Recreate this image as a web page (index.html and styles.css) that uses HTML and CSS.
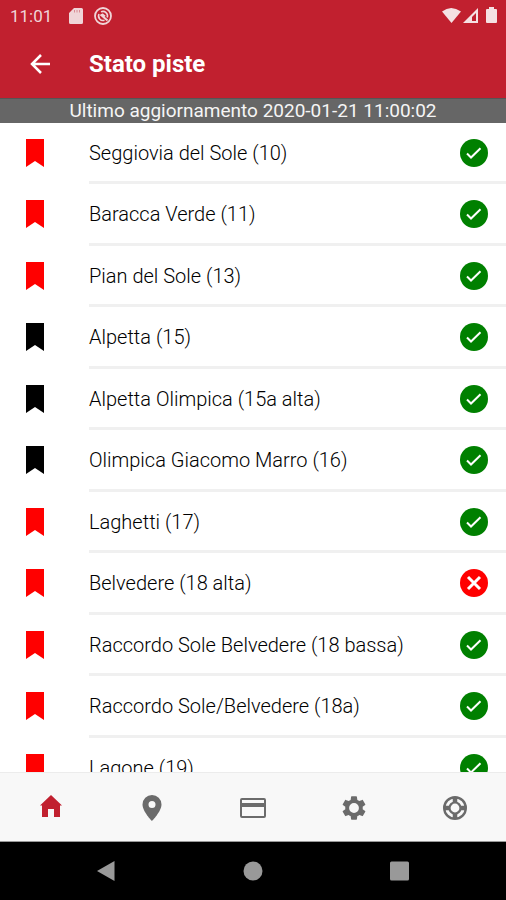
FILE: index.html
```html
<!DOCTYPE html>
<html lang="it">
<head>
  <meta charset="UTF-8">
  <meta name="viewport" content="width=device-width, initial-scale=1.0">
  <title>Stato piste</title>
  <link rel="stylesheet" href="styles.css">
</head>
<body>
  <svg class="sprite" aria-hidden="true">
    <symbol id="flag" viewBox="0 0 18 28">
      <path d="M0 0h18v28l-9-6-9 6z" />
    </symbol>
    <symbol id="open" viewBox="0 0 28 28">
      <circle cx="14" cy="14" r="14" />
      <path d="M7 14.500l4 4L20.500 9.200" fill="none" stroke="#fff" stroke-width="2" />
    </symbol>
    <symbol id="closed" viewBox="0 0 28 28">
      <circle cx="14" cy="14" r="14" />
      <path d="M8 8l12 12M20 8L8 20" fill="none" stroke="#fff" stroke-width="3" />
    </symbol>
  </svg>

  <header class="header">
    <div class="status-bar">
      <span class="clock">11:01</span>
      <svg class="sd-card" viewBox="0 0 14 16">
        <path d="M5 0h7.500a1.500 1.500 0 0 1 1.500 1.500v13a1.500 1.500 0 0 1-1.500 1.500h-11A1.500 1.500 0 0 1 0 14.500V5z" fill="#f0d5d8" />
        <path d="M5.500 2v2.500M8 2v2.500M10.500 2v2.500" stroke="#d88c94" stroke-width="1" />
      </svg>
      <svg class="sync" viewBox="0 0 18 18" fill="none" stroke="#f0d5d8">
        <circle cx="9" cy="9" r="8" stroke-width="1.800" />
        <path d="M10.500 13.200A4.500 4.500 0 0 1 5 7M7 4.900A4.500 4.500 0 0 1 13.200 10.500" stroke-width="1.600" />
        <path d="M6.500 7.500l7 6M8 7l3 2.500" stroke-width="2" />
      </svg>
      <svg class="signals" viewBox="0 0 56 18" fill="#f5e1e3">
        <path d="M0 4.500Q9-2.500 19 4.500L9.500 16z" />
        <path d="M21 16L36 1v15z" />
        <path d="M30 10l4-4v8h-4z" fill="#c1202f" />
        <path d="M47 0h5v2h2a1 1 0 0 1 1 1v12a1 1 0 0 1-1 1h-9a1 1 0 0 1-1-1V3a1 1 0 0 1 1-1h2z" />
      </svg>
    </div>
    <div class="toolbar">
      <button class="back" type="button" aria-label="Indietro">
        <svg viewBox="0 0 20 20" fill="none" stroke="#fff" stroke-width="2.500">
          <path d="M20 10H2M11 1l-9 9 9 9" />
        </svg>
      </button>
      <h1 class="title">Stato piste</h1>
    </div>
  </header>

  <p class="updated">Ultimo aggiornamento 2020-01-21 11:00:02</p>

  <main class="content">
    <ul class="slopes">
      <li class="slope">
        <svg class="flag red"><use href="#flag" /></svg>
        <div class="info"><span>Seggiovia del Sole (10)</span><svg class="state green"><use href="#open" /></svg></div>
      </li>
      <li class="slope">
        <svg class="flag red"><use href="#flag" /></svg>
        <div class="info"><span>Baracca Verde (11)</span><svg class="state green"><use href="#open" /></svg></div>
      </li>
      <li class="slope">
        <svg class="flag red"><use href="#flag" /></svg>
        <div class="info"><span>Pian del Sole (13)</span><svg class="state green"><use href="#open" /></svg></div>
      </li>
      <li class="slope">
        <svg class="flag black"><use href="#flag" /></svg>
        <div class="info"><span>Alpetta (15)</span><svg class="state green"><use href="#open" /></svg></div>
      </li>
      <li class="slope">
        <svg class="flag black"><use href="#flag" /></svg>
        <div class="info"><span>Alpetta Olimpica (15a alta)</span><svg class="state green"><use href="#open" /></svg></div>
      </li>
      <li class="slope">
        <svg class="flag black"><use href="#flag" /></svg>
        <div class="info"><span>Olimpica Giacomo Marro (16)</span><svg class="state green"><use href="#open" /></svg></div>
      </li>
      <li class="slope">
        <svg class="flag red"><use href="#flag" /></svg>
        <div class="info"><span>Laghetti (17)</span><svg class="state green"><use href="#open" /></svg></div>
      </li>
      <li class="slope">
        <svg class="flag red"><use href="#flag" /></svg>
        <div class="info"><span>Belvedere (18 alta)</span><svg class="state red"><use href="#closed" /></svg></div>
      </li>
      <li class="slope">
        <svg class="flag red"><use href="#flag" /></svg>
        <div class="info"><span>Raccordo Sole Belvedere (18 bassa)</span><svg class="state green"><use href="#open" /></svg></div>
      </li>
      <li class="slope">
        <svg class="flag red"><use href="#flag" /></svg>
        <div class="info"><span>Raccordo Sole/Belvedere (18a)</span><svg class="state green"><use href="#open" /></svg></div>
      </li>
      <li class="slope">
        <svg class="flag red"><use href="#flag" /></svg>
        <div class="info"><span>Lagone (19)</span><svg class="state green"><use href="#open" /></svg></div>
      </li>
    </ul>
  </main>

  <nav class="tabs">
    <a class="tab active" href="#home" aria-label="Home">
      <svg viewBox="0 0 28 28"><path d="M14 1L25 11.500h-2V23h-6v-8h-6v8H5V11.500H3z" /></svg>
    </a>
    <a class="tab" href="#mappa" aria-label="Mappa">
      <svg viewBox="0 0 28 28"><path fill-rule="evenodd" d="M14 1a9.500 9.500 0 0 0-9.500 9.500C4.500 17.500 14 27 14 27s9.500-9.500 9.500-16.500A9.500 9.500 0 0 0 14 1zm0 6a3.500 3.500 0 1 1 0 7 3.500 3.500 0 0 1 0-7z" /></svg>
    </a>
    <a class="tab" href="#skipass" aria-label="Skipass">
      <svg viewBox="0 0 28 28"><path fill-rule="evenodd" d="M3 4h22a2 2 0 0 1 2 2v16a2 2 0 0 1-2 2H3a2 2 0 0 1-2-2V6a2 2 0 0 1 2-2zm0 2v3h22V6zm0 7v9h22v-9z" /></svg>
    </a>
    <a class="tab" href="#impostazioni" aria-label="Impostazioni">
      <svg viewBox="0 0 24 24"><path d="M19.430 12.980c.04-.32.07-.64.07-.98s-.03-.66-.07-.98l2.110-1.650c.19-.15.24-.42.12-.64l-2-3.460c-.12-.22-.39-.3-.61-.22l-2.490 1c-.52-.4-1.080-.73-1.690-.98l-.38-2.650A.49.49 0 0 0 14 2h-4c-.25 0-.46.180-.49.420l-.38 2.650c-.61.250-1.170.590-1.690.980l-2.490-1c-.23-.09-.49 0-.61.220l-2 3.460c-.13.220-.07.490.12.640l2.110 1.650c-.04.320-.07.650-.07.980s.03.660.07.980l-2.110 1.650c-.19.150-.24.420-.12.640l2 3.460c.12.220.39.300.61.220l2.490-1c.52.400 1.080.730 1.690.980l.38 2.650c.03.240.24.420.49.420h4c.25 0 .46-.18.49-.42l.38-2.650c.61-.25 1.170-.59 1.690-.98l2.490 1c.23.090.49 0 .61-.22l2-3.460c.12-.22.07-.49-.12-.64zM12 16.200a4.200 4.200 0 1 1 0-8.400 4.200 4.200 0 0 1 0 8.400z" /></svg>
    </a>
    <a class="tab" href="#aiuto" aria-label="Aiuto">
      <svg viewBox="0 0 28 28">
        <g fill="none" stroke="currentColor">
          <circle cx="14" cy="14" r="10.800" stroke-width="2.400" />
          <circle cx="14" cy="14" r="5.500" stroke-width="2.200" />
          <path d="M14 3.500V9M14 19v5.500M3.500 14H9M19 14h5.500" stroke-width="4.500" />
        </g>
      </svg>
    </a>
  </nav>

  <div class="system-nav">
    <button type="button" aria-label="Indietro"><svg viewBox="0 0 20 22"><path d="M18.500 1v20L1 11z" /></svg></button>
    <button type="button" aria-label="Schermata iniziale"><svg viewBox="0 0 20 22"><circle cx="10" cy="11" r="9.500" /></svg></button>
    <button type="button" aria-label="App recenti"><svg viewBox="0 0 20 22"><rect y="1.500" width="19" height="19" rx="1.500" /></svg></button>
  </div>
</body>
</html>
```

FILE: styles.css
```css
:root {
  --brand: #c1202f;
  --open: #008000;
  --closed: #ff0000;
  --icon: #6b6b6b;
}

* {
  box-sizing: border-box;
}

body {
  margin: 0;
  height: 100vh;
  display: flex;
  flex-direction: column;
  background: #fff;
  color: #000;
  font-family: Roboto, "Liberation Sans", sans-serif;
  font-size: 20px;
}

svg {
  display: block;
}

button {
  padding: 0;
  border: 0;
  background: none;
}

.sprite {
  display: none;
}

/* Header */
.header {
  background: var(--brand);
  color: #fff;
}

.status-bar {
  display: flex;
  align-items: center;
  height: 32px;
  padding: 0 8px 0 10px;
}

.clock {
  color: #f0d5d8;
  font-size: 17px;
}

.sd-card {
  width: 14px;
  height: 16px;
  margin-left: 17px;
}

.sync {
  width: 18px;
  height: 18px;
  margin-left: 11px;
}

.signals {
  width: 56px;
  height: 18px;
  margin-left: auto;
}

.toolbar {
  display: flex;
  align-items: center;
  height: 66px;
  padding: 0 30px 2px;
}

.back {
  width: 59px;
}

.back svg {
  width: 20px;
  height: 20px;
}

.title {
  margin: 0;
  font-size: 24px;
  font-weight: 700;
}

.updated {
  margin: 0;
  background: #666;
  border-top: 1px solid #555;
  color: #f5f5f5;
  font-size: 19px;
  line-height: 24px;
  text-align: center;
}

/* Slopes */
.content {
  flex: 1;
  min-height: 0;
  overflow-y: auto;
  scrollbar-width: none;
}

.slopes {
  margin: 0;
  padding: 0;
  list-style: none;
}

.slope {
  display: flex;
  padding-left: 26px;
  font-weight: 300;
}

.flag {
  width: 18px;
  height: 28px;
  margin: 16px 45px 0 0;
}

.state {
  width: 28px;
  height: 28px;
}

.info {
  flex: 1;
  display: flex;
  align-items: center;
  justify-content: space-between;
  padding: 16px 18px 14px 0;
  border-bottom: 3px solid #f0f0f0;
}

.slope:nth-child(even) .info {
  padding-bottom: 15px;
}

.red {
  fill: var(--closed);
}

.green {
  fill: var(--open);
}

.black {
  fill: #000;
}

/* Bottom bars */
.tabs {
  display: flex;
  height: 70px;
  background: #f8f8f8;
  border-top: 1px solid #ececec;
  border-bottom: 1px solid #999;
}

.tab {
  flex: 1;
  display: flex;
  align-items: center;
  justify-content: center;
  padding-top: 2px;
  color: var(--icon);
}

.tab.active {
  color: var(--brand);
}

.tab svg {
  width: 28px;
  height: 28px;
  fill: currentColor;
}

.system-nav {
  display: flex;
  height: 58px;
  padding: 0 32px;
  background: #000;
}

.system-nav button {
  flex: 1;
  display: flex;
  align-items: center;
  justify-content: center;
}

.system-nav svg {
  width: 20px;
  height: 22px;
  fill: #999;
}
```
